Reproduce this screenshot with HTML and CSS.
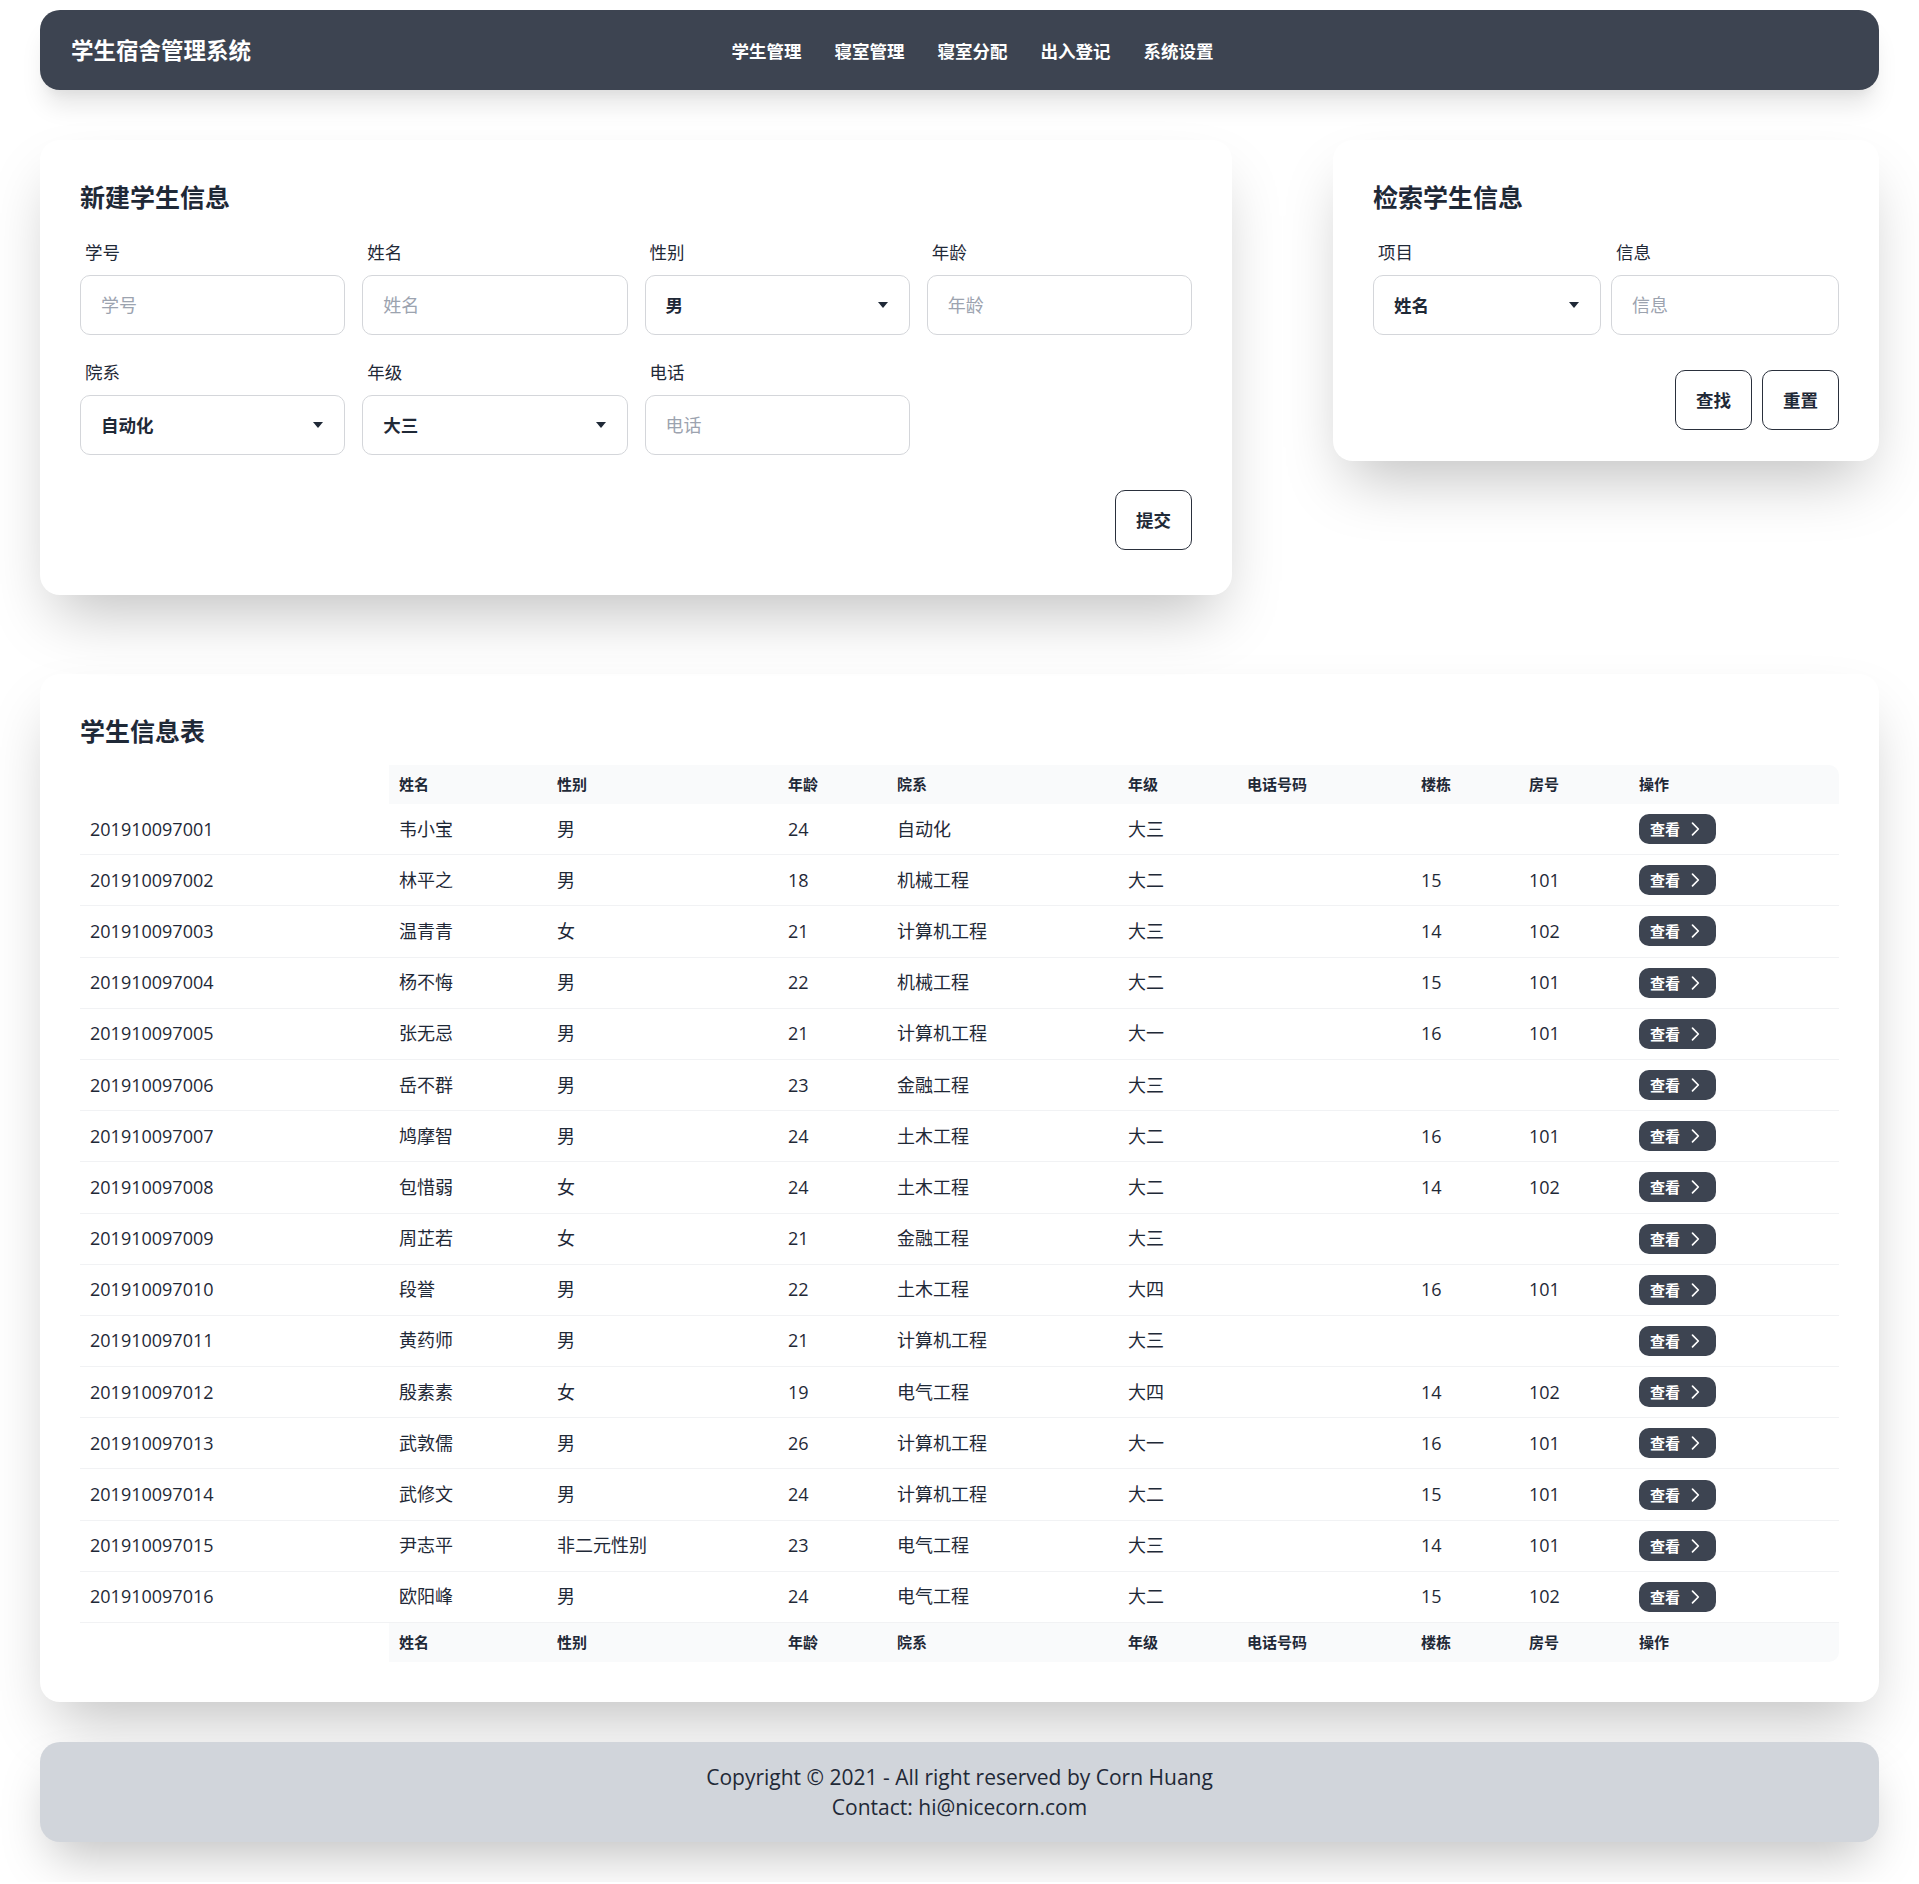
FILE: index.html
```html
<!DOCTYPE html>
<html lang="zh-CN">
<head>
<meta charset="utf-8">
<title>学生宿舍管理系统</title>
<link rel="stylesheet" href="styles.css">
</head>
<body>
<div class="page">
  <header class="navbar">
    <div class="brand">学生宿舍管理系统</div>
    <nav class="menu">
      <a>学生管理</a>
      <a>寝室管理</a>
      <a>寝室分配</a>
      <a>出入登记</a>
      <a>系统设置</a>
    </nav>
    <div></div>
  </header>

  <section class="top-row">
    <div class="card card-new">
      <h2 class="card-title">新建学生信息</h2>
      <div class="form-grid four">
        <div class="field"><label>学号</label><div class="input placeholder">学号</div></div>
        <div class="field"><label>姓名</label><div class="input placeholder">姓名</div></div>
        <div class="field"><label>性别</label><div class="input select"><span>男</span><svg class="caret" width="10" height="6" viewBox="0 0 10 6"><path d="M0 0h10L5 6z"/></svg></div></div>
        <div class="field"><label>年龄</label><div class="input placeholder">年龄</div></div>
        <div class="field"><label>院系</label><div class="input select"><span>自动化</span><svg class="caret" width="10" height="6" viewBox="0 0 10 6"><path d="M0 0h10L5 6z"/></svg></div></div>
        <div class="field"><label>年级</label><div class="input select"><span>大三</span><svg class="caret" width="10" height="6" viewBox="0 0 10 6"><path d="M0 0h10L5 6z"/></svg></div></div>
        <div class="field"><label>电话</label><div class="input placeholder">电话</div></div>
      </div>
      <div class="actions"><button class="btn">提交</button></div>
    </div>

    <div class="card card-search">
      <h2 class="card-title">检索学生信息</h2>
      <div class="form-grid two">
        <div class="field"><label>项目</label><div class="input select"><span>姓名</span><svg class="caret" width="10" height="6" viewBox="0 0 10 6"><path d="M0 0h10L5 6z"/></svg></div></div>
        <div class="field"><label>信息</label><div class="input placeholder">信息</div></div>
      </div>
      <div class="actions"><button class="btn">查找</button><button class="btn">重置</button></div>
    </div>
  </section>

  <section class="card card-table">
    <h2 class="card-title">学生信息表</h2>
    <table class="table">
      <colgroup>
        <col class="c1"><col class="c2"><col class="c3"><col class="c4"><col class="c5"><col class="c6"><col class="c7"><col class="c8"><col class="c9"><col>
      </colgroup>
      <thead>
        <tr><th class="blank"></th><th>姓名</th><th>性别</th><th>年龄</th><th>院系</th><th>年级</th><th>电话号码</th><th>楼栋</th><th>房号</th><th>操作</th></tr>
      </thead>
      <tbody>
        <tr><td>201910097001</td><td>韦小宝</td><td>男</td><td>24</td><td>自动化</td><td>大三</td><td></td><td></td><td></td><td><button class="view">查看<svg width="20" height="20" viewBox="0 0 24 24"><path d="M9 5l7 7-7 7"/></svg></button></td></tr>
        <tr><td>201910097002</td><td>林平之</td><td>男</td><td>18</td><td>机械工程</td><td>大二</td><td></td><td>15</td><td>101</td><td><button class="view">查看<svg width="20" height="20" viewBox="0 0 24 24"><path d="M9 5l7 7-7 7"/></svg></button></td></tr>
        <tr><td>201910097003</td><td>温青青</td><td>女</td><td>21</td><td>计算机工程</td><td>大三</td><td></td><td>14</td><td>102</td><td><button class="view">查看<svg width="20" height="20" viewBox="0 0 24 24"><path d="M9 5l7 7-7 7"/></svg></button></td></tr>
        <tr><td>201910097004</td><td>杨不悔</td><td>男</td><td>22</td><td>机械工程</td><td>大二</td><td></td><td>15</td><td>101</td><td><button class="view">查看<svg width="20" height="20" viewBox="0 0 24 24"><path d="M9 5l7 7-7 7"/></svg></button></td></tr>
        <tr><td>201910097005</td><td>张无忌</td><td>男</td><td>21</td><td>计算机工程</td><td>大一</td><td></td><td>16</td><td>101</td><td><button class="view">查看<svg width="20" height="20" viewBox="0 0 24 24"><path d="M9 5l7 7-7 7"/></svg></button></td></tr>
        <tr><td>201910097006</td><td>岳不群</td><td>男</td><td>23</td><td>金融工程</td><td>大三</td><td></td><td></td><td></td><td><button class="view">查看<svg width="20" height="20" viewBox="0 0 24 24"><path d="M9 5l7 7-7 7"/></svg></button></td></tr>
        <tr><td>201910097007</td><td>鸠摩智</td><td>男</td><td>24</td><td>土木工程</td><td>大二</td><td></td><td>16</td><td>101</td><td><button class="view">查看<svg width="20" height="20" viewBox="0 0 24 24"><path d="M9 5l7 7-7 7"/></svg></button></td></tr>
        <tr><td>201910097008</td><td>包惜弱</td><td>女</td><td>24</td><td>土木工程</td><td>大二</td><td></td><td>14</td><td>102</td><td><button class="view">查看<svg width="20" height="20" viewBox="0 0 24 24"><path d="M9 5l7 7-7 7"/></svg></button></td></tr>
        <tr><td>201910097009</td><td>周芷若</td><td>女</td><td>21</td><td>金融工程</td><td>大三</td><td></td><td></td><td></td><td><button class="view">查看<svg width="20" height="20" viewBox="0 0 24 24"><path d="M9 5l7 7-7 7"/></svg></button></td></tr>
        <tr><td>201910097010</td><td>段誉</td><td>男</td><td>22</td><td>土木工程</td><td>大四</td><td></td><td>16</td><td>101</td><td><button class="view">查看<svg width="20" height="20" viewBox="0 0 24 24"><path d="M9 5l7 7-7 7"/></svg></button></td></tr>
        <tr><td>201910097011</td><td>黄药师</td><td>男</td><td>21</td><td>计算机工程</td><td>大三</td><td></td><td></td><td></td><td><button class="view">查看<svg width="20" height="20" viewBox="0 0 24 24"><path d="M9 5l7 7-7 7"/></svg></button></td></tr>
        <tr><td>201910097012</td><td>殷素素</td><td>女</td><td>19</td><td>电气工程</td><td>大四</td><td></td><td>14</td><td>102</td><td><button class="view">查看<svg width="20" height="20" viewBox="0 0 24 24"><path d="M9 5l7 7-7 7"/></svg></button></td></tr>
        <tr><td>201910097013</td><td>武敦儒</td><td>男</td><td>26</td><td>计算机工程</td><td>大一</td><td></td><td>16</td><td>101</td><td><button class="view">查看<svg width="20" height="20" viewBox="0 0 24 24"><path d="M9 5l7 7-7 7"/></svg></button></td></tr>
        <tr><td>201910097014</td><td>武修文</td><td>男</td><td>24</td><td>计算机工程</td><td>大二</td><td></td><td>15</td><td>101</td><td><button class="view">查看<svg width="20" height="20" viewBox="0 0 24 24"><path d="M9 5l7 7-7 7"/></svg></button></td></tr>
        <tr><td>201910097015</td><td>尹志平</td><td>非二元性别</td><td>23</td><td>电气工程</td><td>大三</td><td></td><td>14</td><td>101</td><td><button class="view">查看<svg width="20" height="20" viewBox="0 0 24 24"><path d="M9 5l7 7-7 7"/></svg></button></td></tr>
        <tr><td>201910097016</td><td>欧阳峰</td><td>男</td><td>24</td><td>电气工程</td><td>大二</td><td></td><td>15</td><td>102</td><td><button class="view">查看<svg width="20" height="20" viewBox="0 0 24 24"><path d="M9 5l7 7-7 7"/></svg></button></td></tr>
      </tbody>
      <tfoot>
        <tr><th class="blank"></th><th>姓名</th><th>性别</th><th>年龄</th><th>院系</th><th>年级</th><th>电话号码</th><th>楼栋</th><th>房号</th><th>操作</th></tr>
      </tfoot>
    </table>
  </section>

  <footer class="footer">
    <p>Copyright © 2021 - All right reserved by Corn Huang</p>
    <p>Contact: hi@nicecorn.com</p>
  </footer>
</div>
</body>
</html>
```

FILE: styles.css
```css
* { box-sizing: border-box; }

html, body {
  margin: 0;
  padding: 0;
  background: #ffffff;
}

body {
  font-family: "Open Sans", "Noto Sans CJK SC", sans-serif;
  color: #1f2937;
}

.page {
  padding: 10px 40px 40px;
}

.navbar {
  height: 80px;
  background: #3d4451;
  border-radius: 20px;
  display: grid;
  grid-template-columns: 1fr auto 1fr;
  align-items: center;
  padding: 0 31px;
  color: #ffffff;
  box-shadow: 0 20px 25px -5px rgba(0,0,0,0.1), 0 10px 10px -5px rgba(0,0,0,0.04);
}

.brand {
  font-size: 22.5px;
  font-weight: 700;
  line-height: 30px;
  padding-top: 2px;
}

.menu {
  display: flex;
  gap: 33px;
  padding-left: 26px;
  padding-top: 2px;
}

.menu a {
  font-size: 17.5px;
  font-weight: 700;
  line-height: 25px;
  color: #ffffff;
}

.top-row {
  margin-top: 50px;
  display: flex;
  justify-content: space-between;
  align-items: flex-start;
}

.card {
  background: #ffffff;
  border-radius: 20px;
  padding: 40px;
  box-shadow: 0 31px 62px -15px rgba(0,0,0,0.25);
}

.card-new {
  width: 1192px;
  padding-bottom: 45px;
}

.card-search {
  width: 546px;
  padding-bottom: 31px;
}

.card-title {
  margin: 0 0 15px;
  font-size: 25px;
  line-height: 35px;
  font-weight: 700;
  color: #1f2937;
}

.form-grid {
  display: grid;
  row-gap: 15px;
}

.form-grid.four {
  grid-template-columns: repeat(4, 1fr);
  column-gap: 17px;
}

.form-grid.two {
  grid-template-columns: repeat(2, 1fr);
  column-gap: 10px;
}

.field {
  display: flex;
  flex-direction: column;
}

.field label {
  padding: 10px 5px;
  font-size: 17.5px;
  line-height: 25px;
  color: #1f2937;
}

.input {
  height: 60px;
  border: 1px solid #d4d6da;
  border-radius: 10px;
  padding: 0 20px;
  display: flex;
  align-items: center;
  font-size: 18px;
  line-height: 25px;
  background: #ffffff;
}

.input.placeholder {
  color: #9ca3af;
}

.input.select {
  justify-content: space-between;
  font-weight: 700;
  font-size: 17.5px;
  color: #1f2937;
  padding-right: 21px;
}

.caret {
  fill: #1f2937;
}

.actions {
  display: flex;
  justify-content: flex-end;
  gap: 10px;
  margin-top: 35px;
}

.btn {
  height: 60px;
  padding: 0 20px;
  border: 1px solid #2a303c;
  border-radius: 10px;
  background: transparent;
  font-family: inherit;
  font-size: 17.5px;
  font-weight: 700;
  color: #1f2937;
  line-height: 25px;
}

.card-table {
  margin-top: 79px;
}

.card-table .card-title {
  margin-bottom: 16px;
}

.table {
  width: 100%;
  border-collapse: separate;
  border-spacing: 0;
  table-layout: fixed;
}

.c1 { width: 309px; }
.c2 { width: 158px; }
.c3 { width: 231px; }
.c4 { width: 109px; }
.c5 { width: 231px; }
.c6 { width: 119px; }
.c7 { width: 174px; }
.c8 { width: 108px; }
.c9 { width: 110px; }

.table th {
  text-align: left;
  font-size: 15px;
  line-height: 19px;
  font-weight: 700;
  padding: 10px;
  background: #f9fafb;
  color: #1f2937;
}

.table th.blank {
  background: #ffffff;
}

.table thead th:last-child {
  border-top-right-radius: 10px;
}

.table tfoot th:last-child {
  border-bottom-right-radius: 10px;
}

.table tbody tr {
  height: 51.2px;
}

.table td {
  padding: 0 10px;
  font-size: 18px;
  line-height: 25px;
  color: #1f2937;
  border-bottom: 1px solid #f1f2f4;
  vertical-align: middle;
  white-space: nowrap;
}

.view {
  height: 30px;
  padding: 0 11px;
  display: inline-flex;
  align-items: center;
  gap: 5px;
  background: #3d4451;
  color: #ffffff;
  border: none;
  border-radius: 10px;
  font-family: inherit;
  font-size: 15px;
  font-weight: 700;
  line-height: 20px;
  vertical-align: middle;
}

.view svg {
  fill: none;
  stroke: #ffffff;
  stroke-width: 2;
  stroke-linecap: round;
  stroke-linejoin: round;
}

.footer {
  margin-top: 40px;
  background: #d1d5db;
  border-radius: 20px;
  padding: 20px;
  text-align: center;
  box-shadow: 0 25px 50px -12px rgba(0,0,0,0.25);
}

.footer p {
  margin: 0;
  font-size: 21px;
  line-height: 30px;
  color: #1f2937;
}
```
